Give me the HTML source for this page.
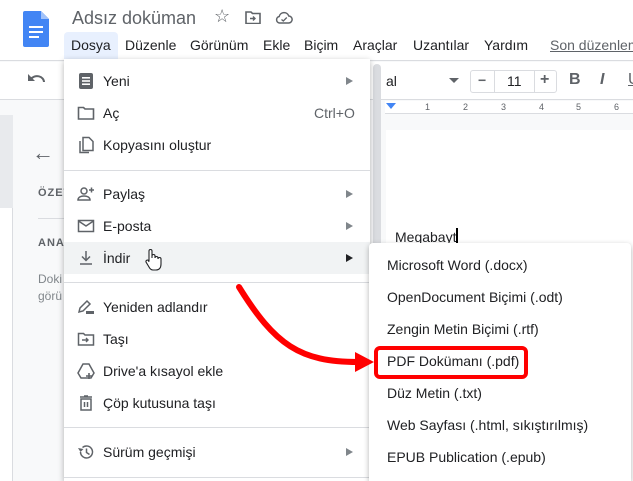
<!DOCTYPE html>
<html style="width:633px;height:481px;overflow:hidden"><head><meta charset="utf-8"><style>
*{margin:0;padding:0;box-sizing:border-box}
body{width:633px;height:481px;overflow:hidden;position:relative;background:#f8f9fa;font-family:"Liberation Sans",Arial,sans-serif;color:#202124}
.a{position:absolute}
.mi{position:absolute;left:0;width:306px;height:32px;font-size:14px;line-height:32px}
.mi span.t{position:absolute;left:39px}
.mi .ar{position:absolute;left:282px;top:12px;width:0;height:0;border-left:7px solid #80868b;border-top:4px solid transparent;border-bottom:4px solid transparent}
.mi svg{position:absolute;left:13px;top:7px}
.sep{position:absolute;left:0;width:306px;height:1px;background:#dadce0}
.si{position:absolute;left:18px;font-size:14px;color:#202124}
</style></head><body>
<div class="a" style="left:0;top:0;width:633px;height:61px;background:#fff;border-bottom:1px solid #dadce0"></div>
<svg class="a" style="left:23px;top:11px" width="26" height="36" viewBox="0 0 26 36"><path d="M2 0h16l8 8v26a2 2 0 0 1-2 2H2a2 2 0 0 1-2-2V2a2 2 0 0 1 2-2z" fill="#4285f4"/><path d="M18 0l8 8h-8z" fill="#a1c2fa"/><rect x="6" y="15" width="14" height="2" fill="#fff"/><rect x="6" y="20" width="14" height="2" fill="#fff"/><rect x="6" y="25" width="10" height="2" fill="#fff"/></svg>
<div class="a" style="left:72px;top:8px;font-size:18px;color:#5f6368">Adsız doküman</div>
<div class="a" style="left:214px;top:6px;font-size:18px;color:#5f6368">☆</div>
<svg class="a" style="left:245px;top:11px" width="16" height="13" viewBox="0 0 16 13"><path d="M1 1h5l1.5 1.5H15v10H1z" fill="none" stroke="#5f6368" stroke-width="1.6"/><path d="M5 7.5h5M8 5.5l2 2-2 2" fill="none" stroke="#5f6368" stroke-width="1.4"/></svg>
<svg class="a" style="left:275px;top:11px" width="18" height="13" viewBox="0 0 18 13"><path d="M4.5 12h9a3.5 3.5 0 0 0 .3-7A5 5 0 0 0 4.2 5.5 3.3 3.3 0 0 0 4.5 12z" fill="none" stroke="#5f6368" stroke-width="1.5"/><path d="M6.5 8.5l1.8 1.5 3.5-3.5" fill="none" stroke="#5f6368" stroke-width="1.3"/></svg>
<div class="a" style="left:64px;top:32px;width:54px;height:27px;background:#e8f0fe;border-radius:4px 4px 0 0"></div>
<div class="a" style="top:37px;font-size:14px;left:0;width:633px;white-space:nowrap">
<span class="a" style="left:71px">Dosya</span><span class="a" style="left:125px">Düzenle</span><span class="a" style="left:190px">Görünüm</span><span class="a" style="left:263px">Ekle</span><span class="a" style="left:304px">Biçim</span><span class="a" style="left:353px">Araçlar</span><span class="a" style="left:413px">Uzantılar</span><span class="a" style="left:484px">Yardım</span><span class="a" style="left:550px;color:#5f6368;text-decoration:underline">Son düzenlem</span></div>
<div class="a" style="left:0;top:62px;width:633px;height:38px;background:#fff;border-bottom:1px solid #dadce0"></div>
<svg class="a" style="left:27px;top:72px" width="18" height="14" viewBox="0 0 18 14"><path d="M4 7a7 6 0 0 1 13 3" fill="none" stroke="#5f6368" stroke-width="2"/><path d="M1 2v7h7z" fill="#5f6368"/></svg>
<div class="a" style="left:386px;top:73px;font-size:14px">al</div>
<div class="a" style="left:449px;top:78px;border-top:5px solid #5f6368;border-left:5px solid transparent;border-right:5px solid transparent"></div>
<div class="a" style="left:470px;top:70px;width:87px;height:23px;border:1px solid #dadce0;border-radius:3px;font-size:14px">
<span class="a" style="left:7px;top:1px;font-weight:bold;color:#5f6368">−</span><div class="a" style="left:23px;top:0;width:1px;height:21px;background:#dadce0"></div><span class="a" style="left:36px;top:2px">11</span><div class="a" style="left:63px;top:0;width:1px;height:21px;background:#dadce0"></div><span class="a" style="left:69px;top:0;font-weight:bold;color:#5f6368;font-size:16px">+</span></div>
<div class="a" style="left:569px;top:71px;font-size:16px;font-weight:bold;color:#5f6368">B</div>
<div class="a" style="left:600px;top:71px;font-size:16px;font-style:italic;font-weight:bold;color:#5f6368">I</div>
<div class="a" style="left:628px;top:71px;font-size:16px;color:#5f6368;text-decoration:underline">U</div>
<div class="a" style="left:385px;top:101px;width:248px;height:13px;background:#fff;border-bottom:1px solid #dadce0;font-size:9px;color:#5f6368;white-space:nowrap">
<span class="a" style="left:1px;top:2px;border-top:6px solid #4285f4;border-left:5px solid transparent;border-right:5px solid transparent"></span>
<span class="a" style="left:40px;top:1px">1</span><span class="a" style="left:78px;top:1px">2</span><span class="a" style="left:116px;top:1px">3</span><span class="a" style="left:154px;top:1px">4</span><span class="a" style="left:191px;top:1px">5</span><span class="a" style="left:229px;top:1px">6</span></div>
<div class="a" style="left:386px;top:130px;width:247px;height:351px;background:#fff"></div>
<div class="a" style="left:395px;top:228px;font-size:14px">Megabayt<span style="display:inline-block;width:2px;height:17px;background:#000;vertical-align:-3px"></span></div>
<div class="a" style="left:0;top:115px;width:13px;height:366px;background:#fff;border-right:1px solid #dadce0"></div>
<div class="a" style="left:0;top:115px;width:13px;height:93px;background:#e8eaed"></div>
<div class="a" style="left:32px;top:140px;font-size:22px;color:#5f6368">←</div>
<div class="a" style="left:38px;top:187px;font-size:11px;color:#5f6368;font-weight:bold;letter-spacing:1px">ÖZET</div>
<div class="a" style="left:38px;top:218px;width:30px;height:1px;background:#dadce0"></div>
<div class="a" style="left:38px;top:237px;font-size:11px;color:#5f6368;font-weight:bold;letter-spacing:1px">ANA</div>
<div class="a" style="left:38px;top:271px;font-size:12px;color:#80868b;line-height:17px">Doki<br>görü</div>
<div class="a" style="left:373px;top:64px;width:8px;height:240px;background:#dadce0;border-radius:4px"></div>
<div class="a" style="left:64px;top:59px;width:306px;height:422px;background:#fff;box-shadow:0 2px 6px rgba(0,0,0,.3)">
<div class="mi" style="top:6px"><svg width="18" height="18" viewBox="0 0 18 18"><rect x="2" y="1" width="14" height="16" rx="2" fill="#5f6368"/><rect x="5" y="5" width="8" height="1.6" fill="#fff"/><rect x="5" y="8.2" width="8" height="1.6" fill="#fff"/><rect x="5" y="11.4" width="8" height="1.6" fill="#fff"/></svg><span class="t">Yeni</span><i class="ar"></i></div>
<div class="mi" style="top:38px"><svg width="18" height="18" viewBox="0 0 18 18"><path d="M1.5 3.5h5l1.5 1.5h8.5v10h-15z" fill="none" stroke="#5f6368" stroke-width="1.6"/></svg><span class="t">Aç</span><span style="position:absolute;left:250px;color:#5f6368">Ctrl+O</span></div>
<div class="mi" style="top:70px"><svg width="18" height="18" viewBox="0 0 18 18"><path d="M6 1.5h6l4 4v9H6z M3 5v11.5h9" fill="none" stroke="#5f6368" stroke-width="1.5"/></svg><span class="t">Kopyasını oluştur</span></div>
<div class="sep" style="top:111px"></div>
<div class="mi" style="top:119px"><svg width="18" height="18" viewBox="0 0 18 18"><circle cx="7" cy="6" r="3" fill="none" stroke="#5f6368" stroke-width="1.5"/><path d="M1 15c0-3 3-4 6-4s6 1 6 4z" fill="none" stroke="#5f6368" stroke-width="1.5"/><path d="M12 5h5M14.5 2.5v5" stroke="#5f6368" stroke-width="1.5"/></svg><span class="t">Paylaş</span><i class="ar"></i></div>
<div class="mi" style="top:151px"><svg width="18" height="18" viewBox="0 0 18 18"><rect x="1.5" y="3.5" width="15" height="11" fill="none" stroke="#5f6368" stroke-width="1.5"/><path d="M1.5 4l7.5 5 7.5-5" fill="none" stroke="#5f6368" stroke-width="1.5"/></svg><span class="t">E-posta</span><i class="ar"></i></div>
<div class="mi" style="top:183px;background:#f1f3f4"><svg width="18" height="18" viewBox="0 0 18 18"><path d="M9 2v9M5 7.5l4 4 4-4M3 15h12" fill="none" stroke="#5f6368" stroke-width="1.5"/></svg><span class="t">İndir</span><i class="ar" style="border-left-color:#202124"></i>
<svg style="left:80px;top:6px" width="18" height="24" viewBox="0 0 18 24"><path d="M5 13V3a1.5 1.5 0 0 1 3 0v7V8a1.5 1.5 0 0 1 3 0v2a1.5 1.5 0 0 1 3 0v1a1.5 1.5 0 0 1 3 0v5c0 4-2 6-5 6H9c-2 0-3-1-4-3l-3-5a1.5 1.5 0 0 1 2.5-1.5L5 14" fill="#fff" stroke="#202124" stroke-width="1.1"/></svg></div>
<div class="sep" style="top:223px"></div>
<div class="mi" style="top:232px"><svg width="18" height="18" viewBox="0 0 18 18"><path d="M2 14l1-4 7-7 3 3-7 7z" fill="none" stroke="#5f6368" stroke-width="1.5"/><rect x="9" y="13" width="8" height="3" fill="#5f6368"/></svg><span class="t">Yeniden adlandır</span></div>
<div class="mi" style="top:264px"><svg width="18" height="18" viewBox="0 0 18 18"><path d="M1.5 3.5h5l1.5 1.5h8.5v10h-15z" fill="none" stroke="#5f6368" stroke-width="1.5"/><path d="M5 10h6M9 8l2 2-2 2" fill="none" stroke="#5f6368" stroke-width="1.4"/></svg><span class="t">Taşı</span></div>
<div class="mi" style="top:296px"><svg width="18" height="18" viewBox="0 0 18 18"><path d="M6 2h6l5 9-3 5H4l-3-5z" fill="none" stroke="#5f6368" stroke-width="1.5"/><path d="M12 11v6M9 14h6" stroke="#5f6368" stroke-width="1.6"/></svg><span class="t">Drive'a kısayol ekle</span></div>
<div class="mi" style="top:328px"><svg width="18" height="18" viewBox="0 0 18 18"><path d="M4 5h10v11H4zM3 3h12M7 2h4M7.5 8v5M10.5 8v5" fill="none" stroke="#5f6368" stroke-width="1.5"/></svg><span class="t">Çöp kutusuna taşı</span></div>
<div class="sep" style="top:368px"></div>
<div class="mi" style="top:377px"><svg width="18" height="18" viewBox="0 0 18 18"><path d="M3.5 9a6 6 0 1 0 2-4.5" fill="none" stroke="#5f6368" stroke-width="1.5"/><path d="M1 5l2.5 4 3-3z" fill="#5f6368"/><path d="M9.5 5.5v4l3 2" fill="none" stroke="#5f6368" stroke-width="1.5"/></svg><span class="t">Sürüm geçmişi</span><i class="ar"></i></div>
<div class="sep" style="top:418px"></div>
</div>
<div class="a" style="left:369px;top:243px;width:262px;height:238px;background:#fff;box-shadow:0 2px 6px rgba(0,0,0,.3);border-radius:4px 4px 0 0">
<div class="si" style="top:14px">Microsoft Word (.docx)</div>
<div class="si" style="top:46px">OpenDocument Biçimi (.odt)</div>
<div class="si" style="top:78px">Zengin Metin Biçimi (.rtf)</div>
<div class="si" style="top:110px">PDF Dokümanı (.pdf)</div>
<div class="si" style="top:142px">Düz Metin (.txt)</div>
<div class="si" style="top:174px">Web Sayfası (.html, sıkıştırılmış)</div>
<div class="si" style="top:206px">EPUB Publication (.epub)</div>
</div>
<div class="a" style="left:374px;top:346px;width:154px;height:33px;border:4px solid #f00;border-radius:6px"></div>
<svg class="a" style="left:0;top:0" width="633" height="481"><path d="M239 287C275 345 300 362 358 362" fill="none" stroke="#f00" stroke-width="6" stroke-linecap="round"/><path d="M355 352L374 362L355 372z" fill="#f00"/></svg>
</body></html>
